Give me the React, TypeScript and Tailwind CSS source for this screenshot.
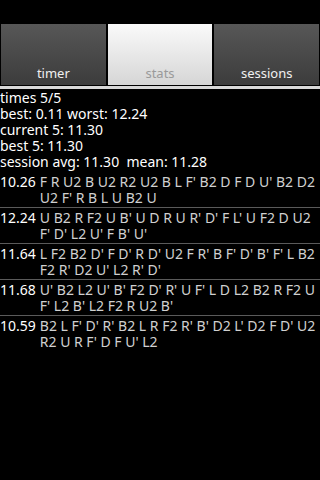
import React from 'react';

const TIMES = [
  { time: '10.26', scramble: "F R U2 B U2 R2 U2 B L F' B2 D F D U' B2 D2 U2 F' R B L U B2 U" },
  { time: '12.24', scramble: "U B2 R F2 U B' U D R U R' D' F L' U F2 D U2 F' D' L2 U' F B' U'" },
  { time: '11.64', scramble: "L F2 B2 D' F D' R D' U2 F R' B F' D' B' F' L B2 F2 R' D2 U' L2 R' D'" },
  { time: '11.68', scramble: "U' B2 L2 U' B' F2 D' R' U F' L D L2 B2 R F2 U F' L2 B' L2 F2 R U2 B'" },
  { time: '10.59', scramble: "B2 L F' D' R' B2 L R F2 R' B' D2 L' D2 F D' U2 R2 U R F' D F U' L2" },
];

const Tab: React.FC<{ label: string; active?: boolean }> = ({ label, active }) => (
  <div
    className={`flex-1 flex items-end justify-center pb-[2px] text-[13px] ${
      active
        ? 'bg-gradient-to-b from-[#fafafa] to-[#d6d6d6] text-[#9a9a9a]'
        : 'bg-gradient-to-b from-[#575757] to-[#3c3c3c] text-[#f0f0f0]'
    }`}
  >
    {label}
  </div>
);

export default function App() {
  return (
    <div
      className="w-[320px] h-[480px] bg-black text-white overflow-hidden"
      style={{ fontFamily: '"Noto Sans", "Open Sans", sans-serif' }}
    >
      <div className="h-[24px]" />
      <div className="flex gap-[2px] h-[61px] px-[1px]">
        <Tab label="timer" />
        <Tab label="stats" active />
        <Tab label="sessions" />
      </div>
      <div className="h-[3px] bg-[#d8d8d8] mt-[1px]" />
      <div className="text-[14px] leading-[16px] pt-[1px]">
        <div>times 5/5</div>
        <div>best: 0.11 worst: 12.24</div>
        <div>current 5: 11.30</div>
        <div>best 5: 11.30</div>
        <div>session avg: 11.30&nbsp;&nbsp;mean: 11.28</div>
        <div className="mt-[2px]">
          {TIMES.map((t, i) => (
            <div
              key={i}
              className={`flex gap-[4px] pt-[2px] pb-[1px] ${i < TIMES.length - 1 ? 'border-b border-[#5a5a5a]' : ''}`}
            >
              <span className="text-white">{t.time}</span>
              <span className="flex-1 text-[#d0d0d0]">{t.scramble}</span>
            </div>
          ))}
        </div>
      </div>
    </div>
  );
}
